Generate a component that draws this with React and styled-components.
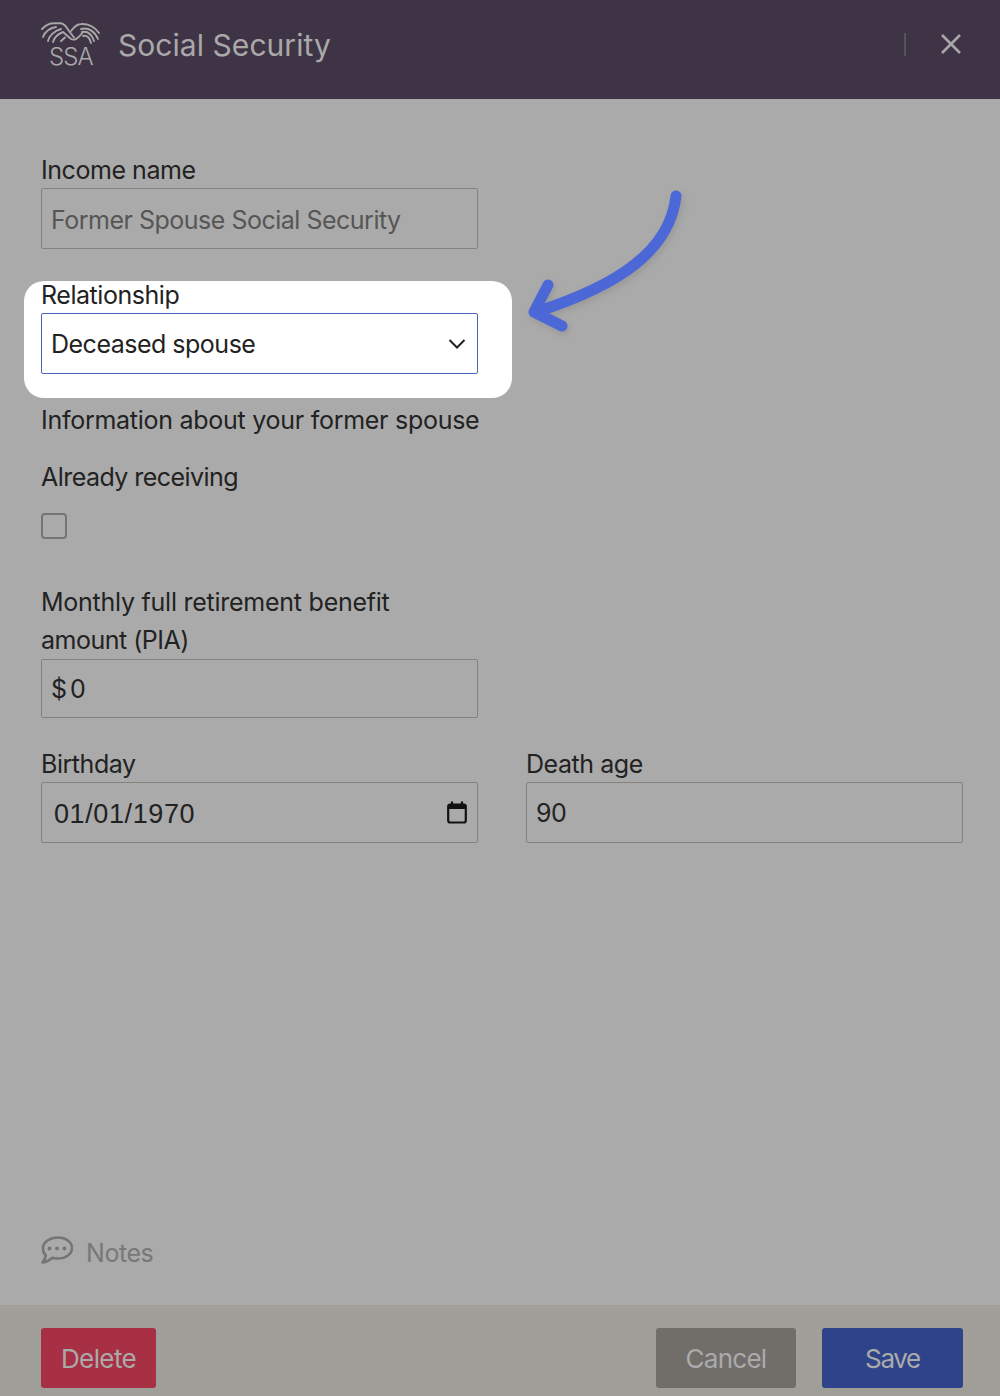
import styled, { createGlobalStyle } from "styled-components";

const GlobalStyle = createGlobalStyle`
  html, body {
    margin: 0;
    padding: 0;
    background: #aaaaaa;
  }
  * {
    box-sizing: border-box;
  }
`;

const Page = styled.div`
  position: relative;
  width: 1000px;
  height: 1396px;
  display: flex;
  flex-direction: column;
  overflow: hidden;
  background: #aaaaaa;
  color: #222222;
  font-family: Inter, "Liberation Sans", sans-serif;
`;

const Header = styled.header`
  height: 99px;
  flex-shrink: 0;
  display: flex;
  align-items: center;
  padding: 0 38px 10px 41px;
  background: #3f3445;
  color: #a9a9a9;
`;

const Logo = styled.div`
  position: relative;
  width: 60px;
  height: 46px;
  margin-right: 17px;
  flex-shrink: 0;
`;

const LogoText = styled.span`
  position: absolute;
  left: 8px;
  top: 22px;
  font-size: 24px;
  line-height: 26px;
  font-weight: 300;
  letter-spacing: -0.9px;
`;

const Title = styled.h1`
  flex: 1;
  margin: 0;
  font-size: 30px;
  line-height: 38px;
  font-weight: 400;
  letter-spacing: 0.05px;
`;

const Divider = styled.span`
  width: 2px;
  height: 23px;
  margin-right: 34px;
  background: #555259;
`;

const CloseSvg = styled.svg`
  margin-bottom: 2px;
`;

const Main = styled.main`
  flex: 1;
  display: flex;
  flex-direction: column;
  padding: 52px 37px 0 41px;
`;

const Label = styled.div`
  font-size: 25px;
  line-height: 38px;
  letter-spacing: ${(p) => p.$spacing ?? -0.45}px;
  margin-top: ${(p) => p.$top || 0}px;
`;

const FieldLabel = styled(Label)`
  margin-bottom: -1px;
`;

const InputBox = styled.div`
  width: ${(p) => p.$width || 437}px;
  height: ${(p) => p.$height || 61}px;
  display: flex;
  align-items: center;
  justify-content: space-between;
  padding: ${(p) => p.$nudge || 0}px 10px 0 9px;
  font-size: 25px;
  letter-spacing: -0.5px;
  word-spacing: ${(p) => p.$words || 0}px;
  border: 1px solid ${(p) => p.$border || "#85827c"};
  border-radius: 2px;
  color: ${(p) => p.$color || "#222222"};
  background: ${(p) => p.$bg || "transparent"};
`;

const Highlight = styled.section`
  width: 488px;
  margin: 32px 0 0 -17px;
  padding: 0 34px 24px 17px;
  border-radius: 20px;
  background: #ffffff;
`;

const HighlightLabel = styled(Label)`
  line-height: 28px;
  margin-bottom: 4px;
`;

const DateValue = styled.span`
  padding: 4px 0 0 3px;
  font-family: "Liberation Sans", Arial, sans-serif;
  font-size: 27px;
  letter-spacing: 0.6px;
`;

const Checkbox = styled.div`
  width: 26px;
  height: 26px;
  margin-top: 17px;
  border: 2px solid #757575;
  border-radius: 4px;
`;

const Columns = styled.div`
  display: flex;
  gap: 48px;
  margin-top: 27px;
`;

const Notes = styled.div`
  display: flex;
  align-items: center;
  gap: 13px;
  margin-top: auto;
  margin-bottom: 35px;
  font-size: 25px;
  line-height: 32px;
  letter-spacing: -0.45px;
  color: #787878;

  svg {
    margin-bottom: 6px;
  }
`;

const Footer = styled.footer`
  height: 91px;
  flex-shrink: 0;
  display: flex;
  justify-content: space-between;
  padding: 23px 37px 0 41px;
  background: linear-gradient(#a09f9a, #9f9e99);
`;

const FooterRight = styled.div`
  display: flex;
  gap: 26px;
`;

const Button = styled.button`
  width: ${(p) => p.$width}px;
  height: 60px;
  padding: 0;
  border: none;
  border-radius: 3px;
  font-family: Inter, "Liberation Sans", sans-serif;
  font-size: 26px;
  letter-spacing: ${(p) => p.$spacing ?? -0.75}px;
  color: #aaaaaa;
  background: ${(p) => p.$bg};
`;

const Arrow = styled.svg`
  position: absolute;
  left: 520px;
  top: 180px;
  filter: drop-shadow(2px 3px 3px rgba(80, 80, 80, 0.18));
`;

const EagleIcon = () => (
  <svg width="60" height="27" viewBox="0 0 60 27" fill="none" stroke="#a8a8a8" strokeWidth="1.9" strokeLinecap="round" strokeLinejoin="round">
    <path d="M1 7 C5 3 9 1.3 13 1.3 H20 C24 2 26 6 28 9 L33 15.5" />
    <path d="M30 9 C33 5 36 2 40 2 C47 1.5 54 5 58 11" />
    <path d="M2 15 C4 10 9 6 15 5" />
    <path d="M7 19 C8 14 13 9 20 7" />
    <path d="M12 20 C13 16 17 12 22 10 L30 17 C33 18.5 36 18 42 10" />
    <path d="M20 19 L24 15.5" />
    <path d="M40 7 C48 5 54 10 57 17" />
    <path d="M41 10 C47 9 51 13 53 19" />
    <path d="M42 14 C46 13 49 16 50 21" />
  </svg>
);

const CloseIcon = () => (
  <CloseSvg width="22" height="22" viewBox="0 0 22 22" stroke="#a8a8a8" strokeWidth="2.6" fill="none">
    <path d="M2 2 L20 20 M20 2 L2 20" />
  </CloseSvg>
);

const ChevronIcon = () => (
  <svg width="20" height="12" viewBox="0 0 20 12" fill="none" stroke="#222222" strokeWidth="2">
    <path d="M2.5 2 L10 9.5 L17.5 2" />
  </svg>
);

const CalendarIcon = () => (
  <svg width="20" height="23" viewBox="0 0 20 23" fill="none">
    <rect x="1.2" y="3.5" width="17.6" height="18" rx="2" stroke="#111111" strokeWidth="2.2" />
    <path d="M1 3.5 H19 V8 H1 Z" fill="#111111" />
    <path d="M5 0.5 V4 M15 0.5 V4" stroke="#111111" strokeWidth="2.2" />
  </svg>
);

const NotesIcon = () => (
  <svg width="32" height="28" viewBox="0 0 32 28" fill="none">
    <path
      d="M17 1.5 C25 1.5 31 6 31 12 C31 18 25 22.5 17 22.5 C15 22.5 13 22.2 11.5 21.7 C9 24 5.5 25.8 1.5 26.5 C3.2 24.5 4.6 22 4.8 19.3 C2.8 17.5 2 15 2 12 C2 6 9 1.5 17 1.5 Z"
      stroke="#757575"
      strokeWidth="2.6"
      strokeLinejoin="round"
    />
    <circle cx="8.5" cy="12.5" r="1.9" fill="#757575" />
    <circle cx="16" cy="12.5" r="1.9" fill="#757575" />
    <circle cx="23.5" cy="12.5" r="1.9" fill="#757575" />
  </svg>
);

const App = () => {
  return (
    <Page>
      <GlobalStyle />
      <Header>
        <Logo>
          <EagleIcon />
          <LogoText>SSA</LogoText>
        </Logo>
        <Title>Social Security</Title>
        <Divider />
        <CloseIcon />
      </Header>

      <Main>
        <FieldLabel>Income name</FieldLabel>
        <InputBox $color="#565656" $nudge={2}>Former Spouse Social Security</InputBox>

        <Highlight>
          <HighlightLabel>Relationship</HighlightLabel>
          <InputBox $border="#4a63b8" $bg="#ffffff">
            Deceased spouse
            <ChevronIcon />
          </InputBox>
        </Highlight>

        <Label $top={3} $spacing={-0.27}>Information about your former spouse</Label>
        <Label $top={19} $spacing={-0.55}>Already receiving</Label>
        <Checkbox />

        <Label $top={44} $spacing={-0.25}>Monthly full retirement benefit</Label>
        <Label $spacing={-0.5}>amount (PIA)</Label>
        <InputBox $height={59} $words={-3}>$ 0</InputBox>

        <Columns>
          <div>
            <FieldLabel>Birthday</FieldLabel>
            <InputBox>
              <DateValue>01/01/1970</DateValue>
              <CalendarIcon />
            </InputBox>
          </div>
          <div>
            <FieldLabel>Death age</FieldLabel>
            <InputBox>90</InputBox>
          </div>
        </Columns>

        <Notes>
          <NotesIcon />
          Notes
        </Notes>
      </Main>

      <Footer>
        <Button $width={115} $bg="#a83044" $spacing={-0.6}>Delete</Button>
        <FooterRight>
          <Button $width={140} $bg="#716e6a">Cancel</Button>
          <Button $width={141} $bg="#2f438b" $spacing={-1.3}>Save</Button>
        </FooterRight>
      </Footer>

      <Arrow width="170" height="160" viewBox="0 0 170 160" fill="none" stroke="#4c68d7" strokeWidth="11" strokeLinecap="round" strokeLinejoin="round">
        <path d="M156 16 C150 70 100 105 16 132" />
        <path d="M28 105 L14 132 L42 146" />
      </Arrow>
    </Page>
  );
};

export default App;
